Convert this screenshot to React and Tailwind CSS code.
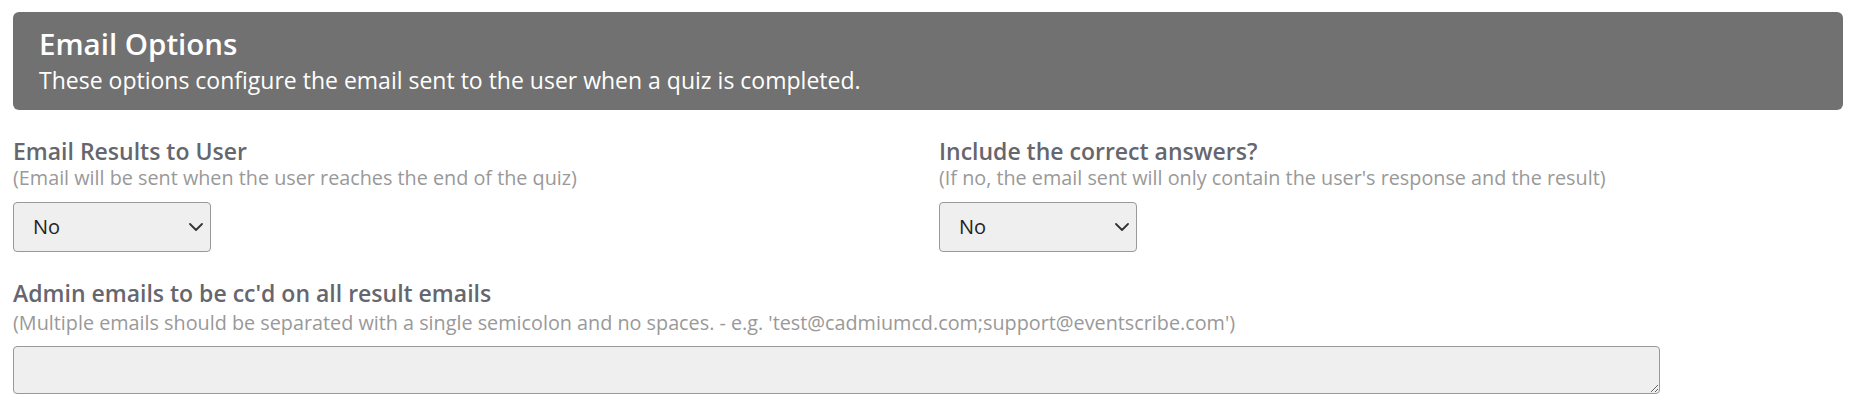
import React from "react";

const Chevron = () => (
    <svg width="14" height="8" viewBox="0 0 14 8" fill="none" className="pointer-events-none absolute right-[8px] top-[21px]">
        <path d="M1 1l6 6 6-6" stroke="#333" strokeWidth="1.8" strokeLinecap="round" strokeLinejoin="round" />
    </svg>
);

const SelectBox = () => (
    <div className="relative mt-[12px] w-[198px]">
        <select
            defaultValue="no"
            className="h-[50px] w-full appearance-none rounded-[4px] border border-[#999] bg-[#efefef] pl-[19px] text-[20px] text-[#222] outline-none"
        >
            <option value="no">No</option>
            <option value="yes">Yes</option>
        </select>
        <Chevron />
    </div>
);

const Field = ({ label, hint, children }) => (
    <div className="flex flex-col items-start">
        <label className="text-[23px] leading-[27px] font-semibold text-[#66666e]">{label}</label>
        <span className="mt-px text-[19.8px] leading-[24px] text-[#999]">{hint}</span>
        {children}
    </div>
);

const App = () => {
    return (
        <div className="min-h-[404px] bg-white pl-[13px] pr-[12px] pt-[12px]" style={{ fontFamily: "'Open Sans', 'Liberation Sans', sans-serif" }}>
            <div className="rounded-[6px] bg-[#717171] pl-[26px] pr-4 pt-[15px] pb-[16px] text-white">
                <h2 className="text-[29.5px] leading-[34px] font-semibold">Email Options</h2>
                <p className="mt-[6px] text-[23px] leading-[27px]">These options configure the email sent to the user when a quiz is completed.</p>
            </div>

            <div className="mt-[28px] grid grid-cols-[926px_1fr]">
                <Field label="Email Results to User" hint="(Email will be sent when the user reaches the end of the quiz)">
                    <SelectBox />
                </Field>
                <Field label="Include the correct answers?" hint="(If no, the email sent will only contain the user's response and the result)">
                    <SelectBox />
                </Field>
            </div>

            <div className="mt-[28px] flex flex-col">
                <label className="text-[23px] leading-[27px] font-semibold text-[#66666e]">Admin emails to be cc'd on all result emails</label>
                <span className="mt-[4px] text-[19.8px] leading-[24px] text-[#999]">(Multiple emails should be separated with a single semicolon and no spaces. - e.g. 'test@cadmiumcd.com;support@eventscribe.com')</span>
                <textarea className="mt-[11px] block h-[48px] w-[1647px] rounded-[4px] border border-[#999] bg-[#efefef] px-3 py-2 text-[20px] outline-none" />
            </div>
        </div>
    );
};

export default App;
